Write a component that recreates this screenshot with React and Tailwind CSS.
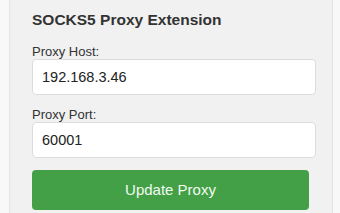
import React, { useState } from 'react';

const App = () => {
  const [host, setHost] = useState('192.168.3.46');
  const [port, setPort] = useState('60001');

  return (
    <div
      className="w-[340px] h-[213px] bg-[#f8f8f8] overflow-hidden"
      style={{ fontFamily: '"Liberation Sans", Arial, sans-serif' }}
    >
      <div className="ml-[9px] w-[324px] h-full bg-[#f1f1f1] border-x border-[#e4e4e4] pl-[22px] pt-[11px]">
        <h3 className="text-[15.5px] leading-[18px] font-bold text-[#333]">SOCKS5 Proxy Extension</h3>

        <label className="block mt-[15px] text-[13px] leading-[15px] text-[#333]">Proxy Host:</label>
        <input
          className="block w-[284px] h-[36px] px-[9px] bg-white border border-[#dcdcdc] rounded-[4px] text-[14.5px] text-[#222] outline-none"
          value={host}
          onChange={(e) => setHost(e.target.value)}
        />

        <label className="block mt-[12px] text-[13px] leading-[15px] text-[#333]">Proxy Port:</label>
        <input
          className="block w-[284px] h-[36px] px-[9px] bg-white border border-[#dcdcdc] rounded-[4px] text-[14.5px] text-[#222] outline-none"
          value={port}
          onChange={(e) => setPort(e.target.value)}
        />

        <button className="block mt-[12px] w-[277px] h-[40px] bg-[#43a047] rounded-[4px] text-[15px] text-[#f1fbf1]">
          Update Proxy
        </button>
      </div>
    </div>
  );
};

export default App;
